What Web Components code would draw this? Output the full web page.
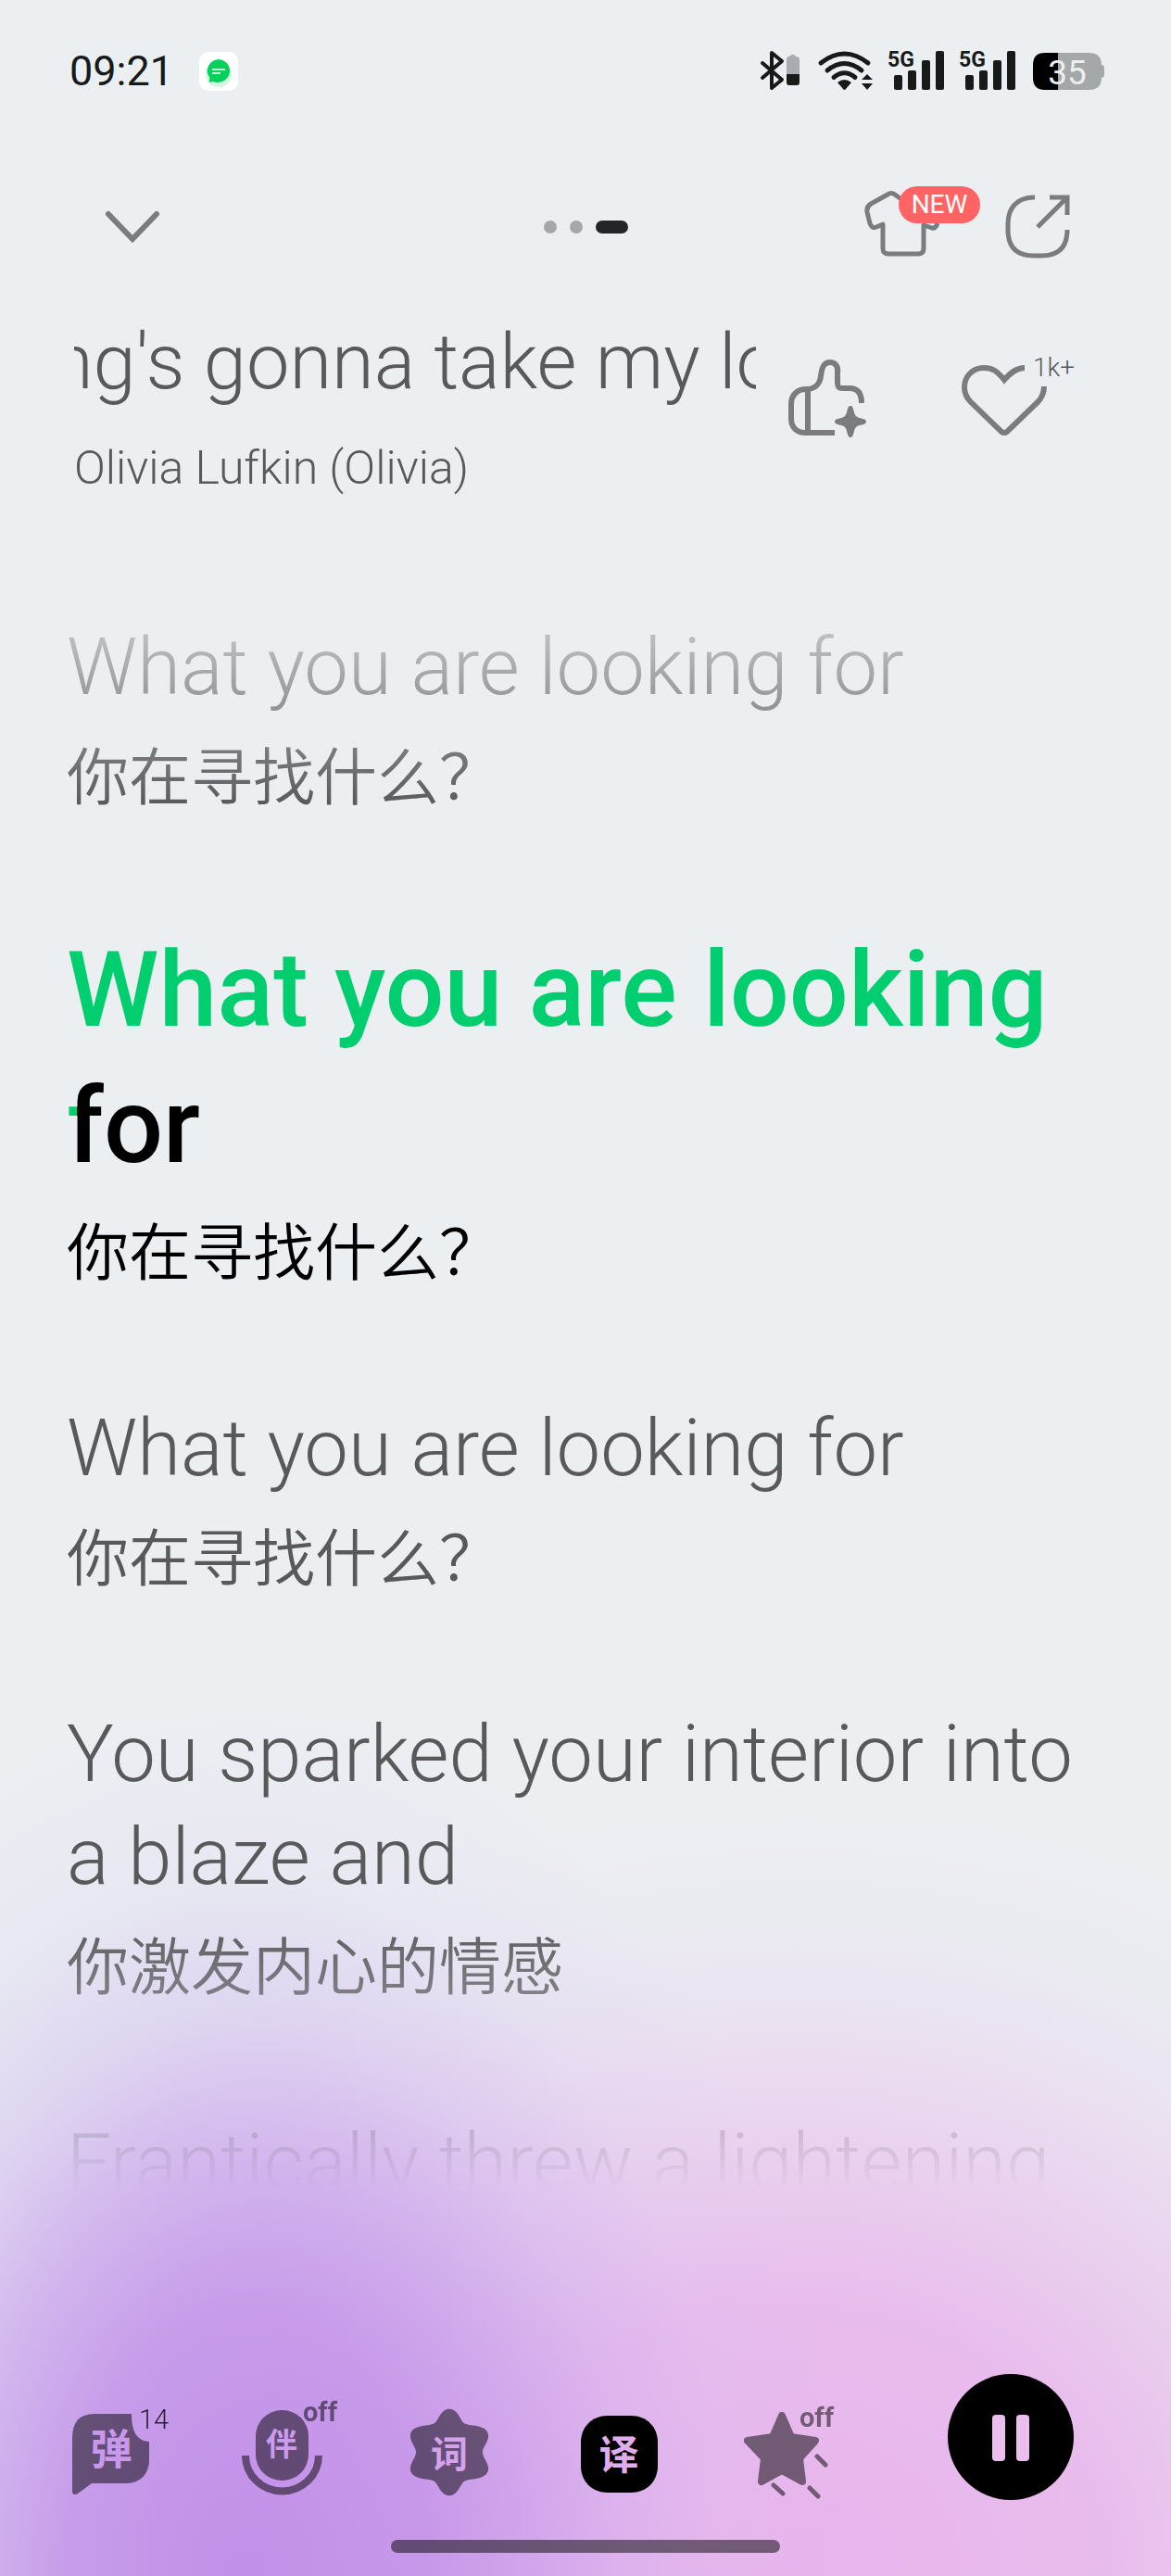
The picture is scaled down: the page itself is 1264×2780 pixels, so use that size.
<!DOCTYPE html>
<html lang="en">
<head>
<meta charset="utf-8">
<meta name="viewport" content="width=device-width, initial-scale=1">
<title>Player</title>
<style>
    body {
        margin: 0;
        background: #ebeff2;
        font-family: Roboto, "Noto Sans CJK SC", sans-serif;
    }
</style>
</head>
<body>

<music-player>
    <status-bar time="09:21" battery="35"></status-bar>
    <player-header></player-header>
    <track-info likes="1k+">
        <span slot="title">ng's gonna take my lo</span>
        <span slot="artist">Olivia Lufkin (Olivia)</span>
    </track-info>
    <lyric-list>
        <lyric-line>What you are looking for<span slot="translation">你在寻找什么？</span></lyric-line>
        <lyric-line active><span class="sung">What you are looking</span> <span class="singing">for</span><span slot="translation">你在寻找什么？</span></lyric-line>
        <lyric-line>What you are looking for<span slot="translation">你在寻找什么？</span></lyric-line>
        <lyric-line>You sparked your interior into a blaze and<span slot="translation">你激发内心的情感</span></lyric-line>
        <lyric-line>Frantically threw a lightening</lyric-line>
    </lyric-list>
    <player-toolbar></player-toolbar>
</music-player>

<script>

class MusicPlayer extends HTMLElement {
    constructor() {
        super();
        this.attachShadow({ mode: "open" });
    }

    connectedCallback() {
        this.shadowRoot.innerHTML = `
            <style>
                :host {
                    display: flex;
                    flex-direction: column;
                    height: 100vh;
                    background:
                        radial-gradient(ellipse 51% 34% at 21% 100%,
                            rgba(193, 144, 233, 1) 0%,
                            rgba(193, 144, 233, .86) 30%,
                            rgba(196, 152, 235, .66) 46%,
                            rgba(200, 165, 238, .36) 63%,
                            rgba(206, 185, 242, .13) 80%,
                            rgba(215, 205, 245, 0) 100%),
                        radial-gradient(ellipse 76% 30% at 68% 100%,
                            rgba(232, 180, 236, 1) 0%,
                            rgba(232, 180, 236, .86) 35%,
                            rgba(233, 184, 236, .56) 54%,
                            rgba(234, 190, 238, .3) 70%,
                            rgba(235, 200, 240, .1) 85%,
                            rgba(235, 210, 240, 0) 100%),
                        #ebeff2;
                }
            </style>
            <slot></slot>
        `;
    }
}

customElements.define("music-player", MusicPlayer);

// Clock and app icon on the left, connections and battery on the right

class StatusBar extends HTMLElement {
    constructor() {
        super();
        this.attachShadow({ mode: "open" });
    }

    connectedCallback() {
        const time = this.getAttribute("time");
        const battery = this.getAttribute("battery");
        const signal = `
            <svg width="61" height="46" viewBox="0 0 61 46" fill="#161a19">
                <text x="0" y="18" font-size="23" font-weight="700">5G</text>
                <rect x="7" y="27" width="9" height="16" rx="2"/>
                <rect x="22" y="22" width="9" height="21" rx="2"/>
                <rect x="37" y="11" width="9" height="32" rx="2"/>
                <rect x="52" y="1" width="9" height="42" rx="2"/>
            </svg>`;

        this.shadowRoot.innerHTML = `
            <style>
                :host {
                    display: flex;
                    justify-content: space-between;
                    align-items: center;
                    padding: 54px 72px 0 75px;
                    color: #161a19;
                }
                .side {
                    display: flex;
                    align-items: center;
                    gap: 16px;
                }
                .left {
                    gap: 28px;
                }
                .time {
                    font-size: 45px;
                    line-height: 46px;
                }
                svg {
                    display: block;
                    overflow: visible;
                }
            </style>
            <div class="side left">
                <span class="time">${time}</span>
                <svg width="42" height="42" viewBox="0 0 42 42">
                    <rect width="42" height="42" rx="10" fill="#fff"/>
                    <circle cx="21" cy="24" r="14" fill="#00d45a" opacity=".18"/>
                    <path d="M21 8a13 12.500 0 1 1-6 24q-3 1-4.500 0l1-4A13 12.500 0 0 1 21 8z" fill="#05d05b"/>
                    <path d="M14 19h14M14 23h9" stroke="#c9f7dc" stroke-width="2"/>
                </svg>
            </div>
            <div class="side">
                <svg width="44" height="46" viewBox="0 0 44 46">
                    <path d="M1 14L22 32L11 41V3L22 12L1 30" fill="none" stroke="#161a19" stroke-width="4" stroke-linecap="round" stroke-linejoin="round"/>
                    <path d="M27 10q0-3 3-3q1-2 4-2q2 0 3 2q4 0 4 3v16H27z" fill="#a9adb1"/>
                    <path d="M27 26h14v9q0 3-3 3h-8q-3 0-3-3z" fill="#161a19"/>
                </svg>
                <svg width="60" height="46" viewBox="0 0 60 46" fill="#161a19">
                    <g fill="none" stroke="#161a19" stroke-width="5" stroke-linecap="round">
                        <path d="M4 14Q29.500-6 55 14"/>
                        <path d="M11 22Q29.500 7 48 22"/>
                        <path d="M18 29.500Q29.500 20 41 29.500"/>
                    </g>
                    <path d="M22 35Q29.500 29 37 35L31 42Q29.500 44 28 42z"/>
                    <path d="M48 32l6-6l6 6zM48 36h12l-6 7z"/>
                </svg>
                ${signal}
                ${signal}
                <svg width="80" height="46" viewBox="0 0 80 46">
                    <path d="M16 3h47q14 0 14 13q3 0 3 4v6q0 4-3 4q0 13-14 13H16z" fill="#a4a8a8"/>
                    <path d="M30 3H16Q3 3 3 16v14q0 13 13 13h14z" fill="#000"/>
                    <text x="40" y="37" font-size="37" text-anchor="middle" fill="#ebeff2">${battery}</text>
                </svg>
            </div>
        `;
    }
}

customElements.define("status-bar", StatusBar);

class PlayerHeader extends HTMLElement {
    constructor() {
        super();
        this.attachShadow({ mode: "open" });
    }

    connectedCallback() {
        this.shadowRoot.innerHTML = `
            <style>
                :host {
                    display: grid;
                    grid-template-columns: 1fr auto 1fr;
                    align-items: center;
                    padding: 100px 108px 0;
                }
                button {
                    display: block;
                    position: relative;
                    padding: 0;
                    border: 0;
                    background: none;
                    font: inherit;
                }
                svg {
                    display: block;
                    fill: none;
                    stroke: #7a7c7e;
                    stroke-width: 5;
                }
                .dots {
                    display: flex;
                    gap: 14px;
                }
                .dots i {
                    width: 14px;
                    height: 14px;
                    border-radius: 7px;
                    background: #a5a8a9;
                }
                .dots .current {
                    width: 35px;
                    background: #222628;
                }
                .actions {
                    display: flex;
                    justify-content: flex-end;
                    gap: 26px;
                }
                .badge {
                    position: absolute;
                    top: 1px;
                    right: 0;
                    width: 88px;
                    border-radius: 20px;
                    background: #ff6364;
                    color: #fff;
                    font-size: 28px;
                    line-height: 40px;
                    text-align: center;
                }
            </style>
            <div>
                <button aria-label="Close">
                    <svg width="70" height="90" viewBox="0 0 70 90">
                        <path d="M9 31L35 58L61 31" stroke-width="6" stroke-linecap="round"/>
                    </svg>
                </button>
            </div>
            <div class="dots"><i></i><i></i><i class="current"></i></div>
            <div class="actions">
                <button aria-label="Skins">
                    <svg width="128" height="90" viewBox="0 0 128 90">
                        <path d="M43 15L36 10Q32 7 28 10L10 20Q5 23 6 29L9 41Q11 47 16 45L23 42V68Q23 74 29 74H61Q67 74 67 68V43L76 46Q80 47 82 41" stroke-linejoin="round"/>
                    </svg>
                    <span class="badge">NEW</span>
                </button>
                <button aria-label="Share">
                    <svg width="72" height="90" viewBox="0 -8 72 90">
                        <path d="M33 5H32C14 5 4 16 4 34V40C4 59 14 68 32 68H40C58 68 68 59 68 40M49 5H68V24M36 37L67 6"/>
                    </svg>
                </button>
            </div>
        `;
    }
}

customElements.define("player-header", PlayerHeader);

// The title is one long line that runs out of its box on both sides

class TrackInfo extends HTMLElement {
    constructor() {
        super();
        this.attachShadow({ mode: "open" });
    }

    connectedCallback() {
        const likes = this.getAttribute("likes");

        this.shadowRoot.innerHTML = `
            <style>
                :host {
                    display: flex;
                    gap: 32px;
                    padding: 53px 106px 0 80px;
                    color: #58595b;
                    font-weight: 300;
                }
                .names {
                    flex: 1;
                    min-width: 0;
                }
                .title {
                    display: flex;
                    justify-content: center;
                    overflow: hidden;
                    white-space: nowrap;
                    font-size: 83px;
                    line-height: 96px;
                }
                .artist {
                    margin-top: 36px;
                    font-size: 50px;
                    line-height: 60px;
                }
                .actions {
                    display: flex;
                    align-items: flex-start;
                    gap: 98px;
                    padding-top: 43px;
                }
                button {
                    display: block;
                    padding: 0;
                    border: 0;
                    background: none;
                    font: inherit;
                }
                svg {
                    display: block;
                    overflow: visible;
                }
            </style>
            <div class="names">
                <div class="title"><slot name="title"></slot></div>
                <div class="artist"><slot name="artist"></slot></div>
            </div>
            <div class="actions">
                <button aria-label="Recommend">
                    <svg width="90" height="90" viewBox="0 0 90 90">
                        <path d="M53 81H21C12 81 6 75 6 66V50C6 40 13 34 22 34C32 34 37 28 38 20C39 11 41 5 48 5C54 5 57 10 56 16V27C56 31 57 33 61 33H69C78 33 82 39 82 49M24 34V81" fill="none" stroke="#7a7c7e" stroke-width="6"/>
                        <path d="M70 52C74 52 73 60 76 63C79 66 87 65 87 69C87 73 79 72 76 75C73 78 74 86 70 86C66 86 67 78 64 75C61 72 53 73 53 69C53 65 61 66 64 63C67 60 66 52 70 52Z" fill="#7a7c7e"/>
                    </svg>
                </button>
                <button aria-label="Like">
                    <svg width="122" height="90" viewBox="0 -4 122 90">
                        <path d="M70 7C62 7 56 11 48 20C40 10 35 7 26 7C14 7 5 16 5 28C5 34 7 39 12 44L45 76Q48 78 51 76L84 44C89 39 91 34 91 27" fill="none" stroke="#7a7c7e" stroke-width="6"/>
                        <text x="79" y="16" font-size="28" font-weight="300" fill="#58595b">${likes}</text>
                    </svg>
                </button>
            </div>
        `;
    }
}

customElements.define("track-info", TrackInfo);

class LyricList extends HTMLElement {
    constructor() {
        super();
        this.attachShadow({ mode: "open" });
    }

    // Lines fade in at the top and are gone a little above the lower edge
    connectedCallback() {
        this.shadowRoot.innerHTML = `
            <style>
                :host {
                    --fade: linear-gradient(transparent, #000 270px, #000 calc(100% - 352px), transparent calc(100% - 60px));
                    display: flex;
                    flex: 1;
                    flex-direction: column;
                    gap: 113px;
                    min-height: 0;
                    margin-top: 65px;
                    padding: 65px 72px 0;
                    overflow: hidden;
                    -webkit-mask-image: var(--fade);
                    mask-image: var(--fade);
                }
            </style>
            <slot></slot>
        `;
    }
}

customElements.define("lyric-list", LyricList);

class LyricLine extends HTMLElement {
    constructor() {
        super();
        this.attachShadow({ mode: "open" });
    }

    connectedCallback() {
        this.shadowRoot.innerHTML = `
            <style>
                :host {
                    display: block;
                    flex: none;
                    color: #58595b;
                }
                :host([active]) {
                    color: #000;
                }
                .text {
                    font-size: 85px;
                    font-weight: 300;
                    line-height: 111px;
                }
                :host([active]) .text {
                    font-size: 113px;
                    font-weight: 500;
                    line-height: 147px;
                }
                .translation {
                    margin-top: 10px;
                    font-family: "Noto Sans CJK SC", sans-serif;
                    font-size: 67px;
                    font-weight: 350;
                    line-height: 96px;
                }
                ::slotted(.sung) {
                    color: #00ce6f;
                }
                ::slotted(.singing) {
                    display: inline-block;
                    background: linear-gradient(90deg, #00ce6f 11px, #000 11px);
                    -webkit-background-clip: text;
                    background-clip: text;
                    -webkit-text-fill-color: transparent;
                }
            </style>
            <div class="text"><slot></slot></div>
            <div class="translation"><slot name="translation"></slot></div>
        `;
    }
}

customElements.define("lyric-line", LyricLine);

class PlayerToolbar extends HTMLElement {
    constructor() {
        super();
        this.attachShadow({ mode: "open" });
    }

    connectedCallback() {
        this.shadowRoot.innerHTML = `
            <style>
                :host {
                    display: block;
                    padding: 141px 0 25px;
                }
                .bar {
                    display: flex;
                    justify-content: space-between;
                    align-items: flex-end;
                    padding: 0 104px 0 78px;
                }
                .tools {
                    display: flex;
                    gap: 79px;
                }
                button {
                    display: block;
                    padding: 0;
                    border: 0;
                    background: none;
                    font: inherit;
                }
                svg {
                    display: block;
                    overflow: visible;
                }
                .shape {
                    opacity: .5;
                }
                .char {
                    font-family: "Noto Sans CJK SC", sans-serif;
                    font-weight: 700;
                    text-anchor: middle;
                }
                .off {
                    font-size: 29px;
                    font-weight: 700;
                    opacity: .5;
                }
                .home {
                    width: 420px;
                    height: 14px;
                    margin: 42px auto 0;
                    border-radius: 7px;
                    background: rgba(0, 0, 0, .5);
                }
            </style>
            <div class="bar">
                <div class="tools">
                    <button aria-label="Comments on screen">
                        <svg width="104" height="104" viewBox="0 0 104 104">
                            <path class="shape" d="M24 10H64C64 28 69 39 83 40V60C83 75 73 85 58 85H21L6 96Q0 99 0 93V36Q0 10 24 10Z"/>
                            <text class="char" x="42" y="65" font-size="45" fill="#c898ec">弹</text>
                            <text x="72" y="26" font-size="29" font-weight="300" opacity=".8">14</text>
                        </svg>
                    </button>
                    <button aria-label="Backing track">
                        <svg width="104" height="104" viewBox="0 0 104 104">
                            <rect class="shape" x="15" y="6" width="57" height="76" rx="28"/>
                            <path class="shape" d="M4 55A39 38 0 0 0 83 55" fill="none" stroke="#000" stroke-width="8"/>
                            <text class="char" x="43" y="55" font-size="34" fill="#ca9aeb">伴</text>
                            <text class="off" x="66" y="18">off</text>
                        </svg>
                    </button>
                    <button aria-label="Lyrics">
                        <svg width="104" height="104" viewBox="0 0 104 104">
                            <path class="shape" d="M32 10C37 3 45 3 50 10C53 14 55 20 59 21C64 23 69 22 74 24C82 26 85 32 82 39C80 44 77 47 77 51C77 56 80 59 82 64C85 71 82 77 74 79C69 81 64 80 59 82C55 83 53 89 50 93C45 100 37 100 32 93C29 89 27 83 23 82C18 80 13 81 8 79C0 77-3 71 0 64C2 59 5 56 5 51C5 47 2 44 0 39C-3 32 0 26 8 24C13 22 18 23 23 21C27 20 29 14 32 10Z"/>
                            <text class="char" x="41" y="68" font-size="40" fill="#d3a2ea">词</text>
                        </svg>
                    </button>
                    <button aria-label="Translation" aria-pressed="true">
                        <svg width="104" height="104" viewBox="0 0 104 104">
                            <path d="M0 54V41C0 24 12 12 29 12H54C71 12 83 24 83 41V66C83 83 71 95 54 95H29C12 95 0 83 0 66Z"/>
                            <text class="char" x="41" y="70" font-size="43" fill="#e0adec">译</text>
                        </svg>
                    </button>
                    <button aria-label="Effects">
                        <svg width="104" height="104" viewBox="0 0 104 104">
                            <g class="shape" stroke="#000" stroke-linecap="round" stroke-linejoin="round">
                                <path d="M34 12L44 35L70 39L53 58L56 83L34 71L12 83L15 58L-3 39L24 35Z" stroke-width="8"/>
                                <path d="M72 56l9 9M25 87l10 9M64 90l9 9" stroke-width="5"/>
                            </g>
                            <text class="off" x="53" y="24">off</text>
                        </svg>
                    </button>
                </div>
                <button aria-label="Pause">
                    <svg width="137" height="137" viewBox="0 0 137 137">
                        <circle cx="68" cy="68" r="68"/>
                        <rect x="48" y="44" width="14" height="50" rx="4" fill="#eabfee"/>
                        <rect x="74" y="44" width="14" height="50" rx="4" fill="#eabfee"/>
                    </svg>
                </button>
            </div>
            <div class="home"></div>
        `;
    }
}

customElements.define("player-toolbar", PlayerToolbar);

</script>
</body>
</html>
